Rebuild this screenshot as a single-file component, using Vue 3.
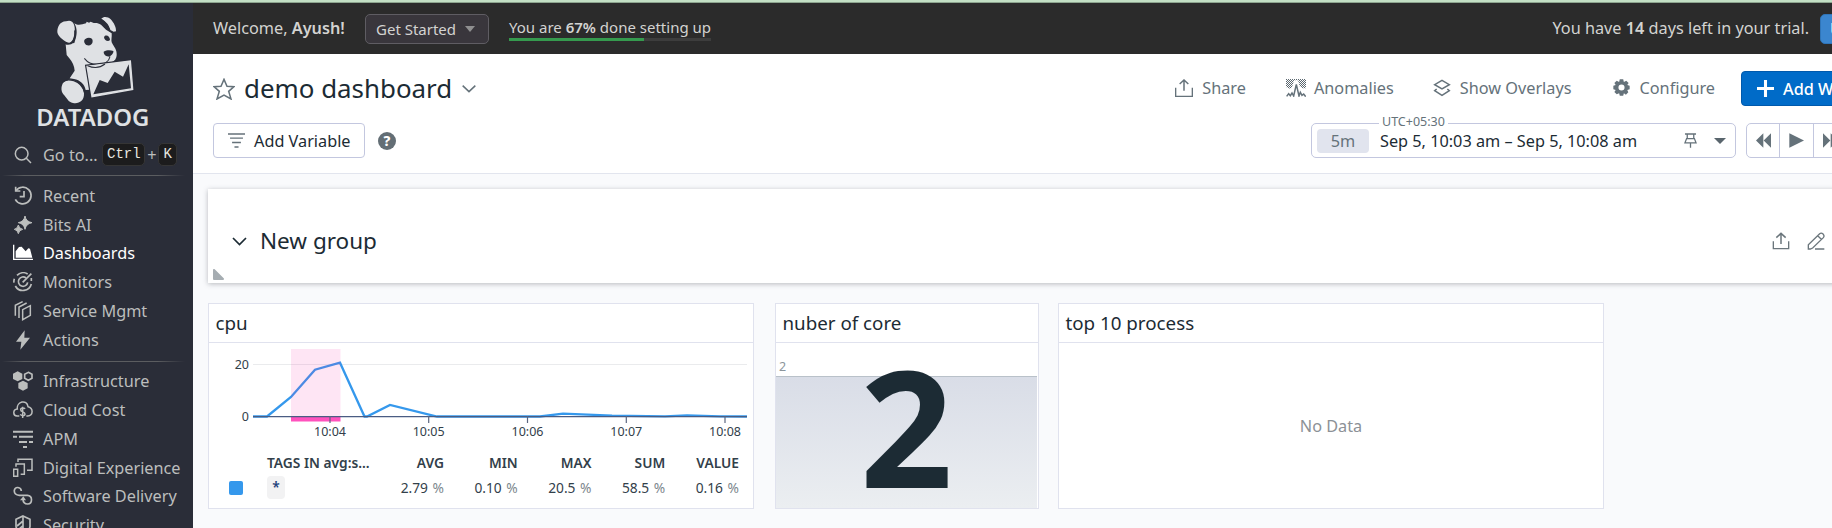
<script setup>
const primaryNav = [
  { label: 'Recent', icon: '<path d="M9 14A25 25 0 1 1 7 40" fill="none" stroke="currentColor" stroke-width="5"/><path d="M8 2V15H22" fill="none" stroke="currentColor" stroke-width="5"/><path d="M33 15V32H20" fill="none" stroke="currentColor" stroke-width="5"/>' },
  { label: 'Bits AI', icon: '<path d="M36 3Q39 20 57 23Q39 26 36 43Q33 26 16 23Q33 20 36 3ZM16 30Q18 41 29 43Q18 45 16 56Q14 45 4 43Q14 41 16 30Z" fill="currentColor" stroke="currentColor" stroke-width="3"/>' },
  { label: 'Dashboards', active: true, icon: '<path d="M2 5V49H60" fill="none" stroke="currentColor" stroke-width="4"/><path d="M8 44V25L18 12L26 11L38 25L46 16L51 17L58 44Z" fill="currentColor"/>' },
  { label: 'Monitors', icon: '<g fill="none" stroke="currentColor" stroke-width="5"><path d="M12 10A26 26 0 0 1 44 6M4 20A26 26 0 0 0 3 32M7 42A26 26 0 0 0 55 36M55 27V18"/><path d="M39 18A14 14 0 1 0 44 31"/><path d="M29 31L55 5"/></g>' },
  { label: 'Service Mgmt', icon: '<g fill="none" stroke="currentColor" stroke-width="4.5"><path d="M29 26L52 14V43L29 56Z"/><path d="M18 51V18L41 6"/><path d="M7 44V13L29 2"/></g>' },
  { label: 'Actions', icon: '<path d="M35 1L9 35H25L22 59L51 23H34Z" fill="currentColor"/>' }
]
const secondaryNav = [
  { label: 'Infrastructure', icon: '<path d="M14 1L28 8V24L14 31L0 24V8ZM30 29L44 36V52L30 59L16 52V36Z" fill="currentColor"/><path d="M46 4L57 10V22L46 28L35 22V10Z" fill="none" stroke="currentColor" stroke-width="5"/>' },
  { label: 'Cloud Cost', icon: '<g fill="none" stroke="currentColor" stroke-width="4.5"><path d="M19 48H12C-1 47-1 28 13 27C10 4 42-3 45 20C62 24 61 47 44 48H40"/><path d="M36 27C34 23 23 22 23 29C23 37 36 34 36 42C36 49 24 48 22 43M29 20V54"/></g>' },
  { label: 'APM', icon: '<path d="M0 5H60V11H0ZM0 20H12V26H0ZM18 20H60V26H18ZM18 36H42V42H18ZM48 36H60V42H48ZM30 51H42V57H30Z" fill="currentColor"/>' },
  { label: 'Digital Experience', icon: '<g fill="none" stroke="currentColor" stroke-width="4.5"><path d="M2 34H14V55H2Z"/><path d="M9 26V18H34V49H23"/><path d="M15 12V4H57V37H42"/></g>' },
  { label: 'Software Delivery', icon: '<g fill="none" stroke="currentColor" stroke-width="5"><path d="M25 15C24 2 6 1 4 13C3 23 10 27 19 28H43C60 29 59 53 44 54C34 54 30 48 30 39"/></g><path d="M21 43L31 31L39 43Z" fill="currentColor"/>' },
  { label: 'Security', icon: '<path d="M30 3L51 13V34Q49 49 30 57Q11 49 9 34V13Z" fill="none" stroke="currentColor" stroke-width="5"/><path d="M30 3V57M12 33L30 18M13 47L30 32" stroke="currentColor" stroke-width="5"/>' }
]
const ticks = [
  { x: 121, label: '10:04' },
  { x: 219.7, label: '10:05' },
  { x: 318.5, label: '10:06' },
  { x: 417.3, label: '10:07' },
  { x: 516, label: '10:08' }
]
const stats = [
  { name: 'AVG', value: '2.79' },
  { name: 'MIN', value: '0.10' },
  { name: 'MAX', value: '20.5' },
  { name: 'SUM', value: '58.5' },
  { name: 'VALUE', value: '0.16' }
]
</script>

<template>
  <div class="page">
    <div class="strip"></div>
    <div class="shell">
      <aside class="sidebar">
        <svg class="logo" viewBox="105 40 350 350">
          <g fill="#dfe1e4">
            <path d="M223 71C237 80 246 73 258 71L260 66L267 69L272 66L281 70C289 69 296 70 303 75L318 90L335 101C336 112 333 121 335 128C342 142 351 150 350 166C350 176 344 184 335 188L326 188C319 195 304 198 292 196L263 200L267 270L257 271C254 254 240 241 222 238L209 236L224 213C223 200 217 186 208 176L200 166L197 134L223 130L228 113C233 93 228 80 223 71Z" />
            <path d="M207 63C221 63 226 80 224 96C222 112 219 125 209 130C196 128 174 112 172 98C172 83 178 66 198 65Z" />
            <path d="M304 57C311 49 324 51 332 59C341 69 349 82 348 95L341 96L331 91C325 78 318 66 304 57Z" />
            <path d="M207 240C229 239 250 258 252 281C253 305 236 313 219 310C204 308 202 296 190 284C181 272 184 256 191 247Z" />
          </g>
          <path d="M304 60C318 68 325 77 329 91" fill="none" stroke="#2a2d38" stroke-width="4" />
          <path d="M198 132C214 136 228 125 225 92" fill="none" stroke="#2a2d38" stroke-width="5" />
          <path d="M188 248C199 234 244 238 254 279" fill="none" stroke="#2a2d38" stroke-width="4" />
          <g fill="#2a2d38">
            <path d="M256 118C266 111 278 115 278 124C278 135 268 140 259 136C251 130 251 121 256 118Z" />
            <path d="M314 109C322 105 329 111 330 121C324 128 313 122 312 113Z" />
            <path d="M311 156C321 150 332 151 340 154C341 162 334 167 328 171C319 170 311 166 311 156Z" />
          </g>
          <path d="M253 176C266 193 279 196 298 194C313 195 327 185 330 171" fill="none" stroke="#2a2d38" stroke-width="3" />
          <path d="M261 200L391 184L398 269L276 291Z" fill="#dfe1e4" stroke="#2a2d38" stroke-width="11" />
          <path d="M261 200L391 184L398 269L276 291Z" fill="#dfe1e4" stroke="#dfe1e4" stroke-width="4" />
          <path d="M280 284L299 241L323 250L344 216L369 231L386 194L393 266Z" fill="#2a2d38" />
          <path d="M263 198Q292 211 315 193" fill="#dfe1e4" stroke="#2a2d38" stroke-width="3" />
          <text x="109" y="380" font-size="69" font-weight="600" fill="#dfe1e4" textLength="339" lengthAdjust="spacingAndGlyphs">DATADOG</text>
        </svg>
        <div class="goto">
          <svg class="search" viewBox="0 0 54 54" fill="none" stroke="currentColor" stroke-width="4.5"><circle cx="23" cy="23" r="19" /><path d="M37 37L51 51" /></svg>
          <span class="goto-label">Go to...</span>
          <kbd class="ctrl">Ctrl</kbd><span class="plus">+</span><kbd class="key">K</kbd>
        </div>
        <div class="rule"></div>
        <nav class="nav first">
          <div v-for="n in primaryNav" :key="n.label" class="nav-item" :class="{ active: n.active }">
            <svg viewBox="0 0 60 60" v-html="n.icon"></svg><span>{{ n.label }}</span>
          </div>
        </nav>
        <div class="rule"></div>
        <nav class="nav second">
          <div v-for="n in secondaryNav" :key="n.label" class="nav-item">
            <svg viewBox="0 0 60 60" v-html="n.icon"></svg><span>{{ n.label }}</span>
          </div>
        </nav>
      </aside>

      <main class="main">
        <header class="topbar">
          <span class="welcome">Welcome, <b>Ayush!</b></span>
          <button class="started">Get Started <i class="caret"></i></button>
          <div class="setup"><span>You are <b>67%</b> done setting up</span><div class="bar"><div class="fill"></div></div></div>
          <span class="trial">You have <b>14</b> days left in your trial.</span>
          <button class="upgrade">Upgrade</button>
        </header>

        <section class="head">
          <div class="title-row">
            <svg class="star" viewBox="0 0 66 66"><path d="M33 4L42 25L63 26L47 40L54 63L33 51L12 63L19 40L3 26L24 25Z" fill="none" stroke="currentColor" stroke-width="4.500" /></svg>
            <h1>demo dashboard</h1>
            <svg class="chev" viewBox="0 0 42 24"><path d="M2 2L21 20L40 2" fill="none" stroke="currentColor" stroke-width="4.500" /></svg>
            <div class="actions">
              <span class="action share"><svg viewBox="0 0 54 54" fill="none" stroke="currentColor"><path d="M2 26V52H52V26" stroke-width="4" /><path d="M27 35V3M14 15L27 3L40 15" stroke-width="4.5" /></svg>Share</span>
              <span class="action anomalies">
                <svg viewBox="0 0 60 54">
                  <defs><pattern id="dots" width="6" height="6" patternUnits="userSpaceOnUse"><path d="M0 0H3V3H0ZM3 3H6V6H3Z" fill="#5c6870" /></pattern></defs>
                  <path d="M0 0H60V28H49L41 22L36 4H24L19 22L14 30L0 24Z" fill="url(#dots)" />
                  <path d="M2 52L8 44L13 50L18 42L23 51L31 16L39 51L43 40L48 49L53 45L59 53" fill="none" stroke="currentColor" stroke-width="4.5" />
                </svg>Anomalies</span>
              <span class="action overlays"><svg viewBox="0 0 54 54" fill="none" stroke="currentColor" stroke-width="4.5"><path d="M27 4L49 17L27 30L5 17Z" /><path d="M11 30L5 35L27 49L49 35L43 30" /></svg>Show Overlays</span>
              <span class="action configure"><svg viewBox="0 0 50 50"><path fill="currentColor" fill-rule="evenodd" d="M20 1H30L32 9L39 5L46 12L42 18L49 20V30L42 32L45 39L38 46L32 42L30 49H20L18 42L11 45L4 38L8 32L1 30V20L8 18L4 12L11 5L18 9ZM25 16A9 9 0 1 0 25 34A9 9 0 1 0 25 16Z" /></svg>Configure</span>
            </div>
            <button class="add-widgets"><svg viewBox="0 0 50 50"><path d="M25 0V50M0 25H50" stroke="#fff" stroke-width="9" /></svg>Add Widgets</button>
          </div>
          <div class="filter-row">
            <button class="variable"><svg viewBox="0 0 50 44"><path d="M0 3H50M6 15H44M12 28H38M19 41H31" stroke="currentColor" stroke-width="4" /></svg>Add Variable</button>
            <span class="help">?</span>
            <div class="time">
              <span class="tz">UTC+05:30</span>
              <span class="span">5m</span>
              <span class="range">Sep 5, 10:03 am – Sep 5, 10:08 am</span>
              <svg class="pin" viewBox="0 0 40 44" fill="none" stroke="currentColor" stroke-width="4"><path d="M3 2H37M10 2V16M30 2V16M8 16H32L37 29H3ZM20 29V44" /></svg>
              <i class="caret dark"></i>
            </div>
            <div class="player">
              <span><svg class="rew" viewBox="0 0 45 44"><path d="M22 0V44L0 22ZM45 0V44L23 22Z" fill="currentColor" /></svg></span>
              <span><svg class="play" viewBox="0 0 45 44"><path d="M1 0L45 22L1 44Z" fill="currentColor" /></svg></span>
              <span><svg class="rew" viewBox="0 0 45 44"><path d="M0 0V44L22 22ZM23 0V44L45 22Z" fill="currentColor" /></svg></span>
            </div>
          </div>
        </section>

        <section class="board">
          <div class="group">
            <svg class="gchev" viewBox="0 0 45 30"><path d="M3 3L22.500 23L42 3" fill="none" stroke="currentColor" stroke-width="5" /></svg>
            <h2>New group</h2>
            <svg class="gicon" viewBox="0 0 54 54" fill="none" stroke="currentColor"><path d="M4 28V50H50V28" stroke-width="4" /><path d="M27 36V4M13 17L27 4L41 17" stroke-width="4.500" /></svg>
            <svg class="gicon" viewBox="0 0 54 54" fill="none" stroke="currentColor" stroke-width="4"><path d="M4 51V38L38 5Q43 1 49 7Q53 12 49 17L17 48L10 51ZM32 11L43 22M24 51H52" /></svg>
            <svg class="corner" viewBox="0 0 11 11"><path d="M1 1V10H10Z" fill="#a6adb2" stroke="#a6adb2" stroke-width="2" stroke-linejoin="round" /></svg>
          </div>

          <div class="cards">
            <article class="card wide">
              <h3>cpu</h3>
              <svg class="chart" viewBox="0 0 544 98">
                <path d="M44 21.500H538" stroke="#eaebed" />
                <polyline points="44,73.500 58,73.500 82,54 106,26.700 131,19.700 155.500,73.500 158,73.500 181,62 228,73.500 331,73.500 354,70.700 403,72.700 456,73.300 478,72.300 511,73.300 538,73.500" fill="none" stroke="#3598ec" stroke-width="2.300" />
                <rect x="82" y="6" width="49.500" height="68" fill="#f528a7" fill-opacity=".12" />
                <rect x="82" y="74" width="49.500" height="4.500" fill="#ff52bd" />
                <path d="M44 73.600H538" stroke="#4a5c83" stroke-width="1.200" />
                <g v-for="t in ticks" :key="t.label">
                  <path :d="`M${t.x} 73V80`" stroke="#5b6680" stroke-width="1.200" />
                  <text :x="t.x" y="93" text-anchor="middle">{{ t.label }}</text>
                </g>
                <text x="40" y="26" text-anchor="end">20</text>
                <text x="40" y="78" text-anchor="end">0</text>
              </svg>
              <div class="legend">
                <div class="series">
                  <b>TAGS IN avg:s...</b>
                  <div class="tag-row"><i class="swatch"></i><span class="tag">*</span></div>
                </div>
                <div v-for="s in stats" :key="s.name" class="stat">
                  <b>{{ s.name }}</b>
                  <span>{{ s.value }} <em>%</em></span>
                </div>
              </div>
            </article>

            <article class="card small">
              <h3>nuber of core</h3>
              <div class="number">
                <span class="scale">2</span>
                <div class="area"></div>
                <span class="big">2</span>
              </div>
            </article>

            <article class="card wide">
              <h3>top 10 process</h3>
              <div class="empty">No Data</div>
            </article>
          </div>
        </section>
      </main>
    </div>
  </div>
</template>

<style>
html, body { margin: 0; overflow: hidden; }
</style>

<style scoped>
* { box-sizing: border-box; }
.page { width: 1832px; height: 528px; overflow: hidden; font-family: "Noto Sans", sans-serif; font-size: 16.250px; color: #1c2b34; background: #f9fafc; }
.strip { height: 3px; background: #c3dfc5; border-bottom: 1px solid #8da58f; }
.shell { display: flex; height: 525px; }
button { font: inherit; margin: 0; padding: 0; display: flex; align-items: center; white-space: nowrap; }
h1, h2, h3 { margin: 0; font-weight: 400; white-space: nowrap; }
svg { display: block; flex: none; }
b { font-weight: 600; }

.sidebar { width: 193px; flex: none; background: #2a2d38; color: #bcbebd; overflow: hidden; }
.logo { width: 116.700px; height: 116.700px; margin: 10.300px 0 0 35px; overflow: visible; }
.goto { display: flex; align-items: center; height: 24px; margin-top: 13px; padding-left: 14px; }
.search { width: 18px; height: 18px; }
.goto-label { margin-left: 11px; width: 59.300px; flex: none; white-space: nowrap; }
kbd { flex: none; font-family: "Liberation Mono", monospace; font-size: 14px; background: #1c1c1d; color: #e9e9e2; border: 1px solid #353535; border-radius: 5px; height: 23px; line-height: 21px; text-align: center; }
.ctrl { width: 43px; }
.key { width: 19px; }
.plus { width: 13px; flex: none; text-align: center; }
.rule { height: 1px; margin: 0 8px 0 2px; background: linear-gradient(90deg, transparent, #5b5d60 12%, #5b5d60 85%, transparent); }
.goto + .rule { margin-top: 8px; }
.nav { display: flex; flex-direction: column; }
.nav.first { margin: 5.500px 0 7px; }
.nav.second { margin-top: 5px; }
.nav-item { height: 28.750px; display: flex; align-items: center; padding-left: 13px; gap: 10px; white-space: nowrap; }
.nav-item svg { width: 20px; height: 20px; }
.nav-item.active { color: #fff; }

.main { width: 1639px; flex: none; display: flex; flex-direction: column; overflow: hidden; }
.topbar { height: 51px; flex: none; background: #2b2b2b; color: #d3d3d1; display: flex; align-items: center; padding-left: 20px; white-space: nowrap; }
.welcome { width: 152px; flex: none; line-height: 20px; margin-top: -2px; }
.started { width: 124px; flex: none; height: 30px; border: 1px solid #5f5d63; border-radius: 5px; background: #39363c; color: #d3d3d1; padding: 0 13px 0 10px; justify-content: space-between; font-size: 15px; }
.caret { width: 0; height: 0; border: 5px solid transparent; border-top: 6px solid #8f8f90; border-bottom: 0; }
.setup { margin-left: 20px; padding-top: 1px; width: 202px; flex: none; line-height: 21px; font-size: 15px; }
.bar { height: 3px; background: #3d3d3d; }
.fill { width: 67%; height: 3px; background: #359a4e; }
.trial { margin: -2px 0 0 auto; line-height: 20px; }
.upgrade { margin: 1px -90px 0 11px; width: 102px; height: 30px; padding-left: 9px; background: #3b86cf; border: 1px solid #2f75b9; border-radius: 5px; color: #fff; flex: none; }

.head { height: 120px; flex: none; background: #fff; border-bottom: 1px solid #e2e5ee; display: flex; flex-direction: column; }
.title-row { display: flex; align-items: center; height: 35px; margin-top: 17px; padding-left: 20px; flex: none; }
.star { width: 22px; height: 22px; color: #65727a; }
h1 { font-size: 25.900px; line-height: 34px; width: 218px; flex: none; margin: -2px 0 0 9px; }
.chev { width: 14px; height: 8px; color: #65727a; }
.actions { display: flex; flex: none; color: #65727a; margin: -2px 0 0 auto; }
.action { display: flex; align-items: center; white-space: nowrap; }
.action svg { width: 18px; height: 18px; margin-right: 9px; }
.anomalies { margin-left: 40px; }
.action.anomalies svg { width: 20px; margin-right: 8px; }
.overlays { margin-left: 39px; }
.configure { margin-left: 42px; }
.action.configure svg { width: 17px; height: 17px; margin-right: 9px; }
.add-widgets { flex: none; width: 140px; height: 35px; margin: 0 -49px 0 26px; padding-left: 15px; gap: 9px; border: 1px solid #0059ac; border-radius: 4px; background: #006bc8; color: #fff; font-weight: 500; }
.add-widgets svg { width: 17px; height: 17px; }
.filter-row { display: flex; align-items: center; height: 35px; margin-top: 17px; padding-left: 20px; flex: none; }
.variable { width: 152px; flex: none; height: 35px; background: #fff; border: 1px solid #c3c7df; border-radius: 4px; padding-left: 14px; gap: 9px; color: #1c2b34; }
.variable svg { width: 17px; height: 15px; color: #65727a; }
.help { width: 18px; height: 18px; margin-left: 13px; border-radius: 50%; background: #636e75; color: #fff; font-size: 14px; line-height: 18px; font-weight: 800; text-align: center; }
.time { position: relative; display: flex; align-items: center; width: 425px; flex: none; height: 35px; margin-left: auto; border: 1px solid #c3c7df; border-radius: 5px; }
.tz { position: absolute; left: 67px; top: -11px; padding: 0 3px; background: #fff; color: #65727a; font-size: 12.500px; line-height: 18px; white-space: nowrap; }
.span { width: 52px; height: 24px; line-height: 24px; margin-left: 5px; border-radius: 4px; background: #e1e4ee; color: #65727a; text-align: center; }
.range { margin-left: 11px; white-space: nowrap; }
.pin { width: 13px; height: 15px; margin-left: auto; color: #65727a; }
.caret.dark { border-width: 6px 6px 0; border-top-color: #59656d; margin: 0 9px 0 17px; }
.player { display: flex; flex: none; width: 104px; height: 35px; margin: 0 -18px 0 10px; border: 1px solid #c3c7df; border-radius: 5px; color: #65727a; }
.player span { width: 34px; display: flex; align-items: center; justify-content: center; border-right: 1px solid #c3c7df; }
.player span:first-child { width: 33px; }
.rew, .play { width: 15px; height: 15px; }

.board { display: flex; flex-direction: column; padding: 15px 0 0 15px; }
.group { position: relative; display: flex; align-items: center; width: 1680px; height: 94px; padding: 13px 64px 0 24px; background: #fff; box-shadow: 0 1px 5px rgba(60, 65, 75, .35); }
.gchev { width: 15px; height: 10px; margin-top: -1px; }
h2 { font-size: 22.500px; line-height: 30px; margin: -4px auto 0 13px; }
.gicon { width: 18px; height: 18px; color: #6b767c; margin: -3px 17px 0 0; }
.gicon + .gicon { margin-right: -1px; }
.corner { position: absolute; left: 5px; bottom: 3px; width: 11px; height: 11px; }
.cards { display: flex; margin-top: 20px; }
.card { height: 206px; background: #fff; border: 1px solid #e0e2ee; flex: none; }
.wide { width: 546px; }
.small { width: 264px; margin: 0 19px 0 21px; }
h3 { height: 39px; line-height: 38px; padding-left: 6.500px; font-size: 18.750px; border-bottom: 1px solid #e0e2ee; }
.chart { width: 544px; height: 98px; }
.chart text { font-size: 12.500px; fill: #32404a; }
.legend { display: flex; font-size: 13.750px; line-height: 22px; color: #32404a; padding: 11px 14px 0 0; }
.series { width: 161px; padding-left: 58px; white-space: nowrap; }
.tag-row { display: flex; align-items: center; margin: 2px 0 0 -38px; }
.swatch { width: 14px; height: 14px; border-radius: 2px; background: #3598ec; margin-right: 24px; }
.tag { width: 18px; height: 23px; line-height: 22px; border-radius: 4px; background: #f2f2f3; color: #1c417a; text-align: center; font-weight: 600; }
.stat { width: 73.800px; display: flex; flex-direction: column; gap: 3px; text-align: right; white-space: nowrap; }
.series + .stat { width: 74px; }
em { font-style: normal; color: #7d878d; margin-left: 1px; }
.number { position: relative; height: 165px; display: flex; flex-direction: column; justify-content: flex-end; overflow: hidden; }
.area { height: 132px; width: 261px; border-top: 1px solid #b9c1c9; background: linear-gradient(#d9dde7, #ebeef1); }
.scale { padding-left: 3px; font-size: 12.500px; line-height: 18px; color: #8c959b; }
.big { position: absolute; inset: 0; display: flex; align-items: center; justify-content: center; padding-right: 1px; font-size: 162.500px; font-weight: 700; line-height: 1; color: #1c2b34; }
.empty { height: 165px; display: flex; align-items: center; justify-content: center; color: #8c9196; }
</style>
